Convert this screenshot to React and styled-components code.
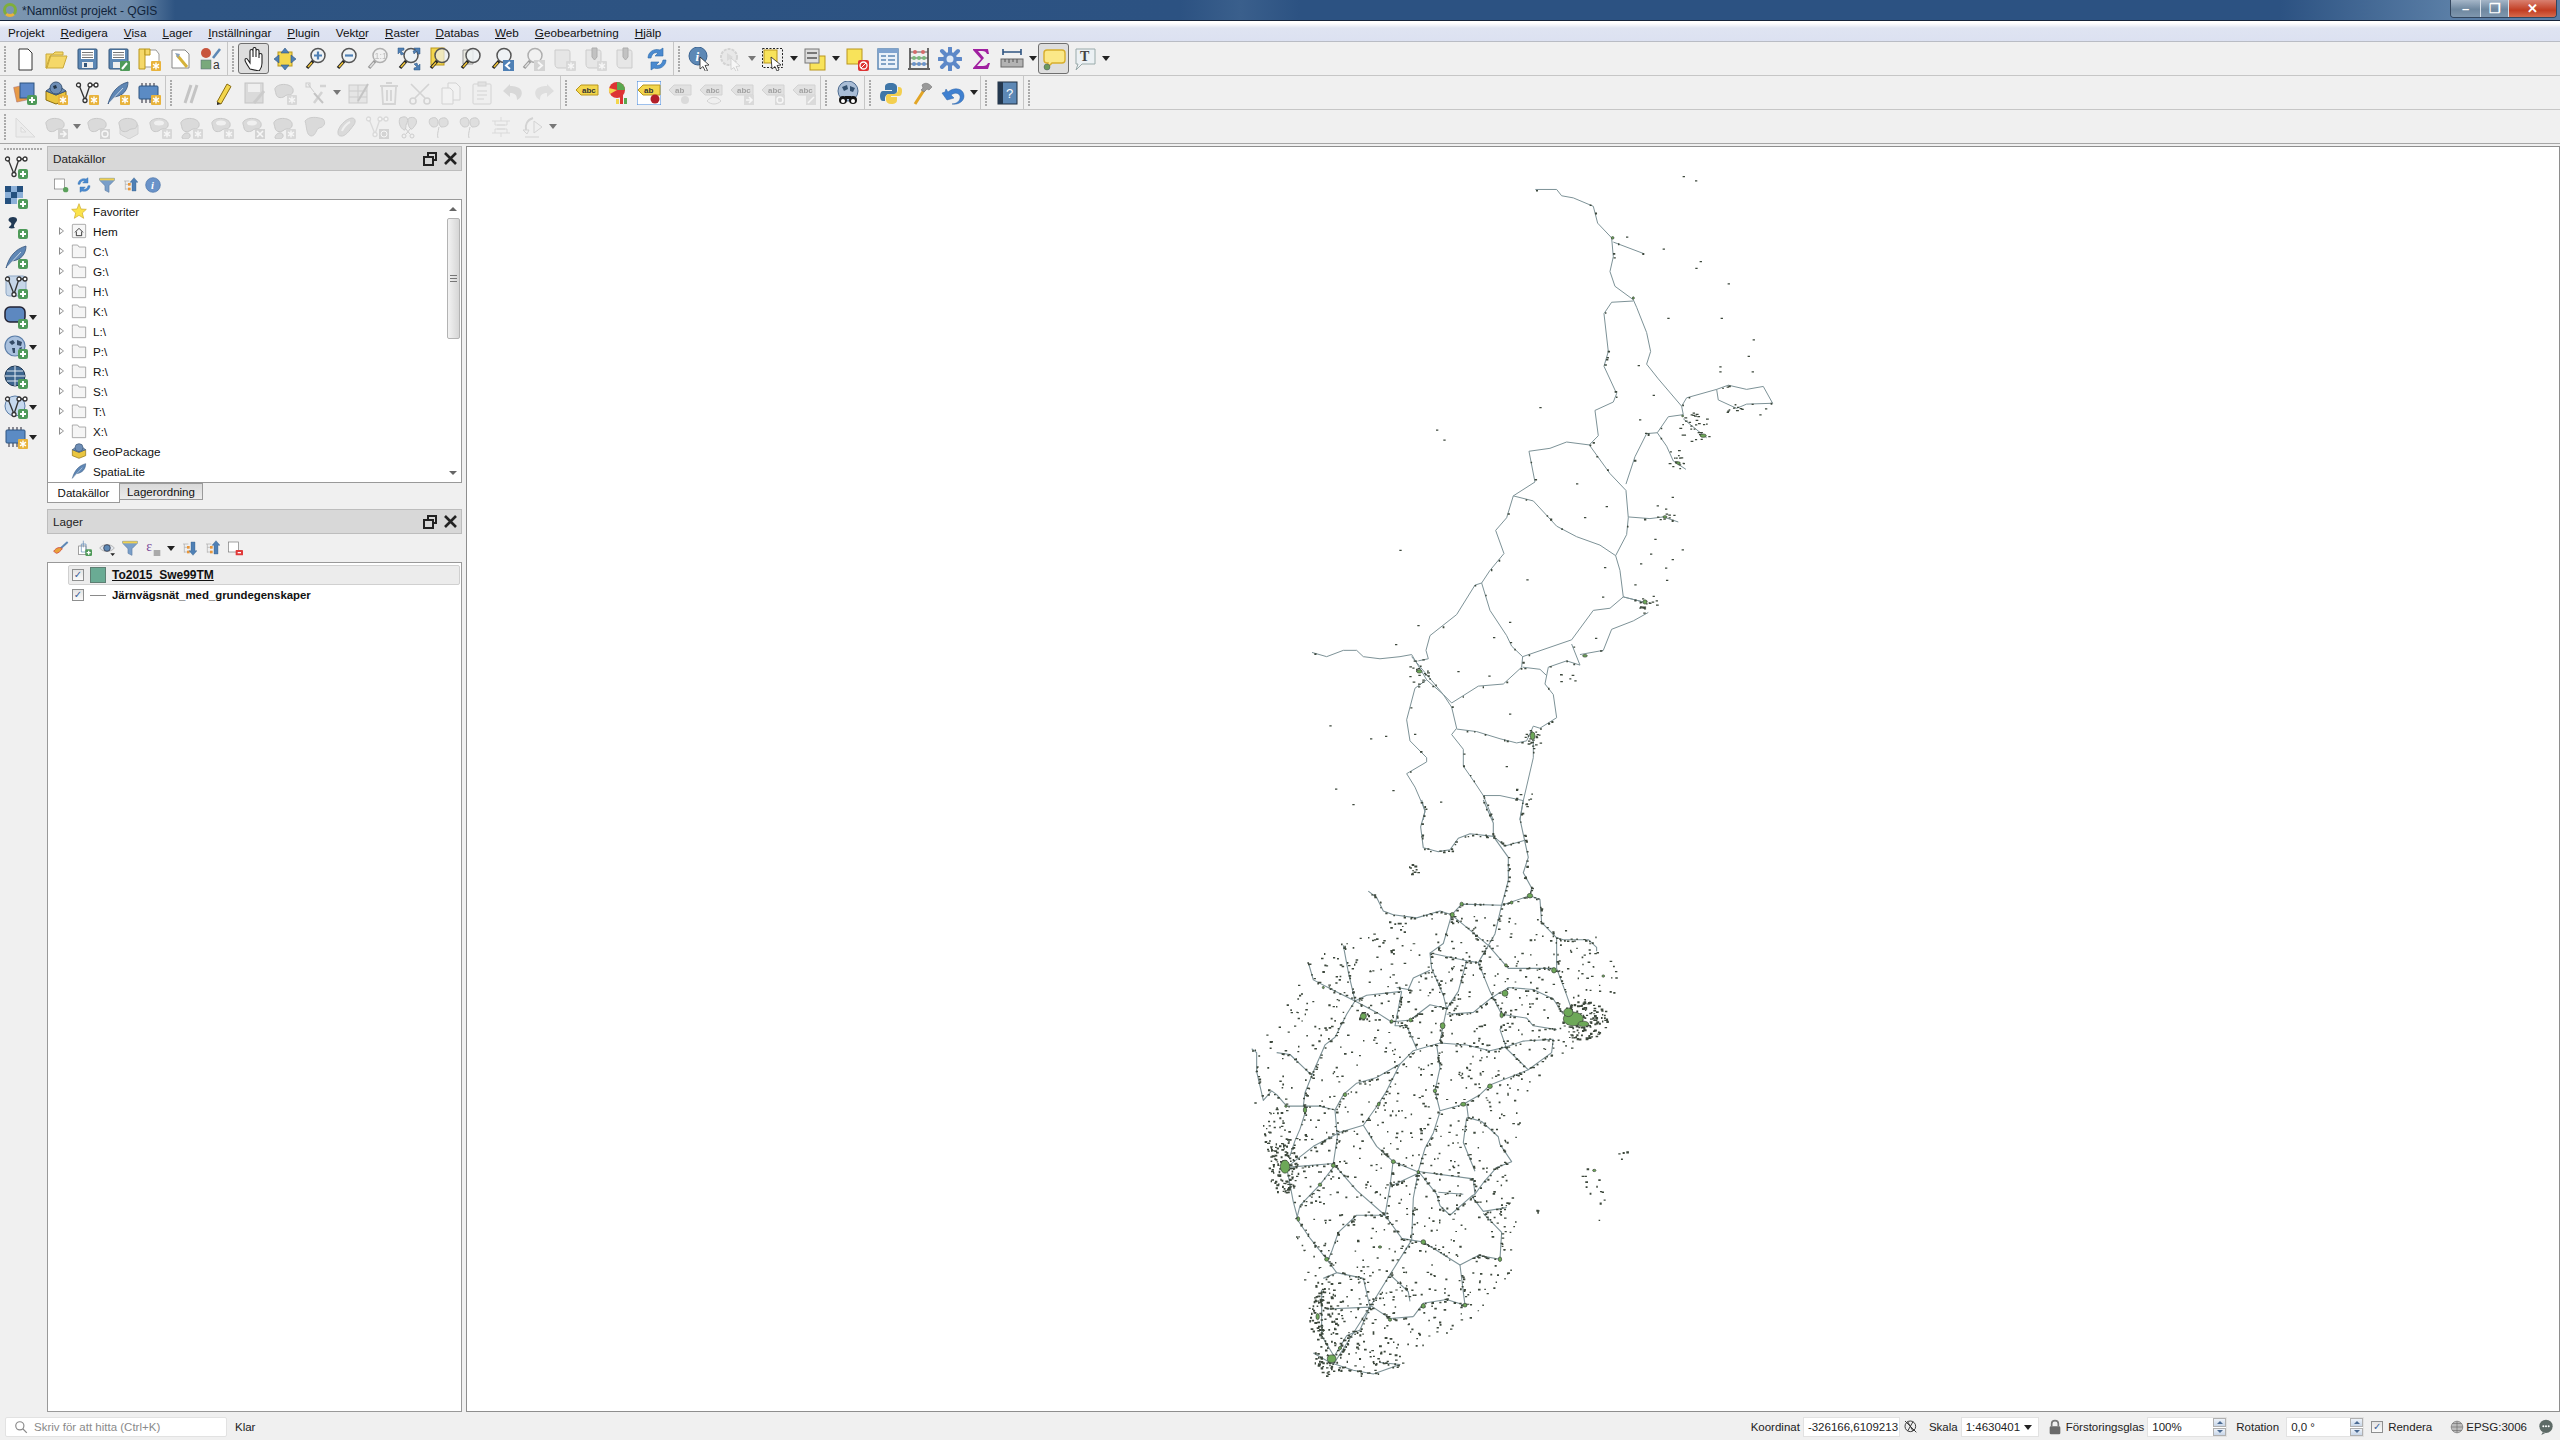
import React from "react";
import styled, { createGlobalStyle } from "styled-components";

const Global = createGlobalStyle`
  html, body { margin: 0; padding: 0; background: #f0f0f0; }
  body { font-family: "Liberation Sans", Arial, sans-serif; font-size: 12px; color: #111; }
`;

/* ---------- icons ---------- */
const I = ({ children, s = 24 }) => (
  <svg width={s} height={s} viewBox="0 0 24 24" fill="none">{children}</svg>
);
const Plus = () => (
  <g>
    <rect x="14" y="14" width="10" height="10" rx="2" fill="#4f9a59" />
    <path d="M19 16v6M16 19h6" stroke="#fff" strokeWidth="2" />
  </g>
);
const Star = () => (
  <g>
    <rect x="14" y="14" width="10" height="10" rx="1" fill="#e8b33c" />
    <path d="M19 15.5v7M16 17.2l6 3.6M22 17.2l-6 3.6" stroke="#fff" strokeWidth="1.4" />
  </g>
);
const Mag = ({ children, glass = "#eef2f5" }) => (
  <g>
    <path d="M10 13L3 21" stroke="#222" strokeWidth="3.4" />
    <path d="M8 15.5L4 20" stroke="#f0c53a" strokeWidth="1.6" />
    <circle cx="14" cy="8.5" r="7" fill={glass} stroke="#555" strokeWidth="1.5" />
    {children}
  </g>
);
const Blob = ({ fill = "#b9bdb6" }) => (
  <path d="M3 6c3-3 9-3 12-2s6 3 5 7-6 2-8 4-8 3-9-2-2-5 0-7z" fill={fill} stroke="#8d918a" />
);
const Vert = ({ stroke = "#333" }) => (
  <g stroke={stroke} strokeWidth="1.3">
    <path d="M4 4l6 15 5-15h6" />
    <circle cx="3.5" cy="4" r="2" fill="#fff" />
    <circle cx="10" cy="19.5" r="2" fill="#fff" />
    <circle cx="15" cy="4" r="2" fill="#fff" />
    <circle cx="21" cy="4" r="2" fill="#fff" />
  </g>
);
const Feather = ({ fill = "#5f87b5" }) => (
  <g>
    <path d="M2 23C5 12 11 4 22 1c0 7-4 14-14 15z" fill={fill} stroke="#37567c" strokeWidth=".8" />
    <path d="M3 22L17 7" stroke="#dfe8f2" strokeWidth=".8" />
  </g>
);
const Globe = () => (
  <g>
    <circle cx="11" cy="11" r="10" fill="#a9c1de" stroke="#5a7da8" strokeWidth="1.2" />
    <path d="M5 7l4-2 2 3-3 2zM13 5l5 2-1 4-4-1zM8 13l3 0 0 5-2 0zM15 13l3-1-1 4z" fill="#334a66" />
  </g>
);
const Chip = () => (
  <g>
    <path d="M5 2v20M9 2v20M13 2v20M17 2v20" stroke="#223" strokeWidth="1" />
    <rect x="2" y="5" width="19" height="13" rx="1" fill="#5b8bc4" stroke="#2f5480" />
  </g>
);
const Box = () => (
  <g>
    <path d="M2 10l10 4 10-4v9l-10 4-10-4z" fill="#e9c53f" stroke="#8a6d10" />
    <path d="M2 10l10-7 10 7-10 4z" fill="#6e8eb6" stroke="#3c5778" />
  </g>
);
const Label = ({ c = "#f3d64c", b = "#b9961c", t = "abc" }) => (
  <g>
    <path d="M1 9l5-5h17v10H6z" fill={c} stroke={b} />
    <text x="7" y="12" fontSize="8" fontWeight="700" fontFamily="Liberation Sans" fill="#333">{t}</text>
  </g>
);
const Scroll = ({ children }) => (
  <g>
    <path d="M3 3h13c2 0 2 2 2 4v14H6c-2 0-3-2-3-4z" fill="#d8d8d0" stroke="#999" />
    {children}
  </g>
);

const icons = {
  doc: <path d="M6 2h9l4 4v17H6z" fill="#fff" stroke="#333" />,
  folder: <path d="M2 7h7l2-2h8v3H7L3 21H2zM6 9h17l-4 12H2z" fill="#f5d869" stroke="#c9a93a" />,
  save: (
    <g>
      <rect x="3" y="2" width="19" height="20" rx="1" fill="#5d88b5" stroke="#35577c" />
      <rect x="6" y="3" width="13" height="9" fill="#fff" />
      <path d="M7 5.5h11M7 8h11M7 10.5h11" stroke="#777" />
      <rect x="7" y="15" width="11" height="6" fill="#eee" />
      <rect x="9" y="16" width="3" height="4" fill="#35577c" />
    </g>
  ),
  saveas: (
    <g>
      <rect x="3" y="2" width="19" height="20" rx="1" fill="#5d88b5" stroke="#35577c" />
      <rect x="6" y="3" width="13" height="9" fill="#fff" />
      <path d="M7 5.5h11M7 8h11M7 10.5h11" stroke="#777" />
      <rect x="7" y="15" width="7" height="6" fill="#eee" />
      <rect x="14" y="14" width="10" height="10" rx="1" fill="#4f9a59" />
      <path d="M16 22l5-6" stroke="#fff" strokeWidth="2" />
    </g>
  ),
  layout: (
    <g>
      <path d="M7 3h12l3 4v13H7z" fill="#fff" stroke="#999" />
      <path d="M2 2h6v20H2z" fill="#f5d869" stroke="#b9961c" />
      <path d="M8 2h5v6H8z" fill="#f5d869" stroke="#b9961c" />
      <Star />
    </g>
  ),
  manager: (
    <g>
      <path d="M4 3h13l4 4v14H4z" fill="#fff" stroke="#888" />
      <path d="M9 8l10 12" stroke="#d5b23a" strokeWidth="3" />
      <path d="M7 6l5 1-2 4z" fill="#8aa0b8" />
    </g>
  ),
  style: (
    <g>
      <circle cx="7" cy="6" r="5" fill="#c8553d" />
      <path d="M14 11l7-9" stroke="#5d88b5" strokeWidth="2.6" />
      <rect x="2" y="13" width="10" height="9" fill="#79a97c" stroke="#567" strokeWidth=".5" />
      <text x="14" y="22" fontSize="12" fontFamily="Liberation Sans" fill="#333">a</text>
    </g>
  ),
  hand: <path d="M8 22c-2-3-5-7-5-9s2-2 3 0l2 3V4c0-2 3-2 3 0v6-8c0-2 3-2 3 0v8-6c0-2 3-2 3 0v7-3c0-2 3-2 3 0v8c0 4-1 6-3 8z" fill="#fff" stroke="#222" strokeWidth="1.1" />,
  pan: (
    <g>
      <rect x="5" y="5" width="14" height="14" fill="#f3d64c" stroke="#b9961c" />
      <path d="M12 1l4 5h-8zM12 23l-4-5h8zM1 12l5-4v8zM23 12l-5 4V8z" fill="#4f80b5" stroke="#2f5480" strokeWidth=".6" />
    </g>
  ),
  zoomin: <Mag><path d="M14 4.5v8M10 8.5h8" stroke="#4f80b5" strokeWidth="2.2" /></Mag>,
  zoomout: <Mag><path d="M10 8.5h8" stroke="#4f80b5" strokeWidth="2.2" /></Mag>,
  zoom11: <Mag><text x="8.5" y="12" fontSize="9" fill="#777" fontFamily="Liberation Sans">1:1</text></Mag>,
  zoomfull: (
    <g>
      <Mag />
      <path d="M1 1h6v2L4 4l3 3-3 1-1-3-2 2zM23 1v6h-2l-1-3-3 3-1-3 3-1-2-2zM23 23h-6v-2l3-1-3-3 3-1 1 3 2-2z" fill="#4f80b5" stroke="#2f5480" strokeWidth=".5" />
    </g>
  ),
  zoomsel: (
    <g>
      <rect x="3" y="1" width="13" height="17" fill="#f3d64c" stroke="#b9961c" />
      <Mag glass="#eef2f5aa" />
    </g>
  ),
  zoomlayer: (
    <g>
      <path d="M4 3h10v14H4z" fill="#e8e8e0" stroke="#999" />
      <Mag glass="#eef2f5cc" />
    </g>
  ),
  zoomlast: (
    <g>
      <Mag />
      <rect x="13" y="13" width="11" height="11" fill="#4f80b5" />
      <path d="M20 15l-4 3.5 4 3.5" stroke="#fff" strokeWidth="2" />
    </g>
  ),
  zoomnext: (
    <g>
      <Mag />
      <rect x="13" y="13" width="11" height="11" fill="#aaa" />
      <path d="M17 15l4 3.5-4 3.5" stroke="#fff" strokeWidth="2" />
    </g>
  ),
  mapnew: <Scroll><Star /></Scroll>,
  mapbook: <Scroll><path d="M9 1h5v9l-2.5 3L9 10z" fill="#5d88b5" stroke="#35577c" /><Star /></Scroll>,
  mapmark: <Scroll><path d="M9 1h5v9l-2.5 3L9 10z" fill="#5d88b5" stroke="#35577c" /></Scroll>,
  refresh: (
    <g fill="#4a8ad0" stroke="#2d6aa8" strokeWidth=".6">
      <path d="M3 11C3 5 9 1 15 3l3-2v8h-8l3-3c-4-1-6 1-7 5z" />
      <path d="M21 13c0 6-6 10-12 8l-3 2v-8h8l-3 3c4 1 6-1 7-5z" />
    </g>
  ),
  identify: (
    <g>
      <circle cx="10" cy="9" r="9" fill="#5d88b5" stroke="#3a6391" />
      <text x="7.5" y="14" fontSize="13" fontWeight="700" fontStyle="italic" fontFamily="Liberation Serif" fill="#fff">i</text>
      <path d="M12 10l9 8-4 .5 2.5 5-2 1-2.5-5-3 2.5z" fill="#fff" stroke="#222" strokeWidth=".8" />
    </g>
  ),
  action: (
    <g>
      <circle cx="10" cy="10" r="8" fill="#ddd" stroke="#aaa" strokeWidth="2" strokeDasharray="3 1" />
      <path d="M8 6l6 4-6 4z" fill="#bbb" />
      <path d="M12 11l9 8-4 .5 2 4-2 1-2-4-3 2z" fill="#fff" stroke="#999" strokeWidth=".8" />
    </g>
  ),
  select: (
    <g>
      <rect x="1.5" y="1.5" width="20" height="19" fill="none" stroke="#222" strokeDasharray="2 1.5" />
      <rect x="3" y="3" width="13" height="13" fill="#f8e35a" stroke="#b9961c" />
      <path d="M10 10l10 8-4 .5 2 4.5-2 1-2-4.5-3 2.5z" fill="#fff" stroke="#222" strokeWidth=".8" />
    </g>
  ),
  selform: (
    <g>
      <rect x="7" y="9" width="15" height="14" fill="#f8e35a" stroke="#b9961c" />
      <rect x="2" y="2" width="14" height="14" fill="#ddd" stroke="#777" />
      <path d="M4 6h10M4 11h10" stroke="#777" strokeWidth="2" />
    </g>
  ),
  deselect: (
    <g>
      <rect x="2" y="2" width="15" height="15" fill="#f8e35a" stroke="#b9961c" />
      <rect x="13" y="13" width="11" height="11" rx="2" fill="#d33" />
      <circle cx="18.5" cy="18.5" r="3.5" stroke="#fff" strokeWidth="1.3" />
      <path d="M16 21l5-5" stroke="#fff" />
    </g>
  ),
  table: (
    <g>
      <rect x="2" y="2" width="20" height="20" fill="#eaf1f9" stroke="#5d88b5" strokeWidth="1.5" />
      <rect x="2" y="2" width="20" height="4" fill="#7fa3cf" />
      <path d="M5 9h5M12 9h7M5 13h5M12 13h7M5 17h5M12 17h7" stroke="#5d88b5" strokeWidth="1.5" />
    </g>
  ),
  abacus: (
    <g>
      <path d="M3 1v20M21 1v20M1 22h22" stroke="#333" strokeWidth="1.4" />
      <path d="M3 5h18M3 11h18M3 17h18" stroke="#555" />
      <g fill="#d56a6a"><circle cx="8" cy="5" r="2" /><circle cx="16" cy="5" r="2" /></g>
      <g fill="#7db87d"><circle cx="7" cy="11" r="2" /><circle cx="12" cy="11" r="2" /><circle cx="17" cy="11" r="2" /></g>
      <g fill="#6a93c9"><circle cx="7" cy="17" r="2" /><circle cx="12" cy="17" r="2" /><circle cx="17" cy="17" r="2" /></g>
    </g>
  ),
  gear: (
    <g>
      <path d="M12 1v22M1 12h22M4 4l16 16M20 4L4 20" stroke="#5d88c8" strokeWidth="4" strokeLinecap="round" />
      <circle cx="12" cy="12" r="7" fill="#5d88c8" />
      <circle cx="12" cy="12" r="3.5" fill="#dfe9f6" />
    </g>
  ),
  sigma: <path d="M4 2h15l1 5h-2c-1-2-2-3-5-3H9l6 7-7 8h6c3 0 4-1 5-3h2l-2 6H4v-1l8-9-8-9z" fill="#a020a0" />,
  measure: (
    <g>
      <path d="M3 5h18M3 2v6M21 2v6" stroke="#2f5480" strokeWidth="1.6" />
      <rect x="1" y="12" width="22" height="8" fill="#b3b3b3" stroke="#666" />
      <path d="M5 12v3M9 12v4M13 12v3M17 12v4" stroke="#555" />
    </g>
  ),
  tip: (
    <g>
      <path d="M5 3h15c2 0 3 1 3 3v7c0 2-1 3-3 3H10l-5 5 1-5H5c-2 0-3-1-3-3V6c0-2 1-3 3-3z" fill="#fbe888" stroke="#d8ae2c" strokeWidth="1.4" />
      <circle cx="5" cy="20" r="3" fill="#6b9a5b" stroke="#456" strokeWidth=".5" />
    </g>
  ),
  text: (
    <g>
      <path d="M3 2h19v15H9l-6 6 2-6H3z" fill="#ecf1f4" stroke="#9aa" />
      <text x="7" y="14" fontSize="14" fontWeight="700" fontFamily="Liberation Serif" fill="#444">T</text>
    </g>
  ),
  dsm: (
    <g>
      <rect x="2" y="5" width="12" height="15" fill="#e79a46" stroke="#a66" strokeWidth=".5" transform="rotate(-12 8 12)" />
      <rect x="7" y="2" width="14" height="15" fill="#5d88c8" stroke="#2f5480" />
      <Plus />
    </g>
  ),
  gpkg: <g><Box /><circle cx="12" cy="7" r="6" fill="#6e8eb6" stroke="#3c5778" /><path d="M9 5l3-1 1 3-3 1z" fill="#234" /><Star /></g>,
  newshp: <g><Vert /><Star /></g>,
  newsl: <g><Feather /><Star /></g>,
  newmem: <g><Chip /><Star /></g>,
  pencils: <g stroke="#888" strokeWidth="3"><path d="M5 22L11 4M11 22L17 4" /></g>,
  pencil: (
    <g>
      <path d="M6 21L16 3l4 2.5L10 23z" fill="#f3d64c" stroke="#8a6d10" />
      <path d="M6 21l4 2-4 1z" fill="#333" />
    </g>
  ),
  saveedit: <g><rect x="3" y="2" width="18" height="20" fill="#bbb" stroke="#888" /><rect x="6" y="3" width="12" height="8" fill="#eee" /><path d="M12 22L22 10" stroke="#999" strokeWidth="3" /></g>,
  addfeat: <g><Blob /><Star /></g>,
  vtool: <g><path d="M4 3l6 8" stroke="#999" /><rect x="2" y="2" width="4" height="4" stroke="#999" /><path d="M16 5h6M10 22l8-11" stroke="#aaa" strokeWidth="2.5" /><path d="M10 12l9 10" stroke="#888" strokeWidth="2" /></g>,
  modattr: <g><rect x="3" y="4" width="18" height="18" fill="#dcd6b8" stroke="#999" /><path d="M3 10h18M3 16h18M12 4v18" stroke="#999" /><path d="M12 20L22 3" stroke="#888" strokeWidth="2" /></g>,
  trash: <g fill="none" stroke="#c2a8a4" strokeWidth="1.8"><path d="M5 6l1 17h12l1-17M3 5h18M9 2h6M10 9v11M14 9v11" /></g>,
  cut: <g stroke="#aaa" strokeWidth="1.6"><path d="M3 3l14 14M21 3L7 17" /><circle cx="5" cy="20" r="3" /><circle cx="19" cy="20" r="3" /></g>,
  copy: <g stroke="#aaa" fill="#f4f4f4"><path d="M9 2h8l4 4v13H9z" /><path d="M3 7h8l3 3v13H3z" /></g>,
  paste: <g stroke="#aaa" fill="#eee"><rect x="3" y="3" width="18" height="20" rx="1" /><rect x="8" y="1" width="8" height="4" fill="#ccc" /><path d="M7 10h10M7 14h10M7 18h7" /></g>,
  undo: <path d="M9 3L2 10l7 6v-4c5 0 7 2 7 7 4-2 6-6 4-10-2-3-6-4-11-4z" fill="#b7b7b7" />,
  redo: <path d="M15 3l7 7-7 6v-4c-5 0-7 2-7 7-4-2-6-6-4-10 2-3 6-4 11-4z" fill="#c4c4c4" />,
  lblabc: <Label />,
  diagram: (
    <g>
      <circle cx="11" cy="9" r="8" fill="#d33" />
      <path d="M11 9V1a8 8 0 018 8z" fill="#5aa84f" />
      <path d="M11 9l-7 4a8 8 0 01-1-6z" fill="#f3d64c" />
      <rect x="14" y="14" width="3" height="9" fill="#d33" />
      <rect x="18" y="17" width="3" height="6" fill="#5aa84f" />
      <rect x="10" y="18" width="3" height="5" fill="#f3d64c" />
    </g>
  ),
  lblhl: (
    <g>
      <rect x="0" y="0" width="24" height="24" fill="#fff" stroke="#3a80d8" />
      <Label t="ab" />
      <circle cx="18" cy="18" r="4.5" fill="#b3202a" />
    </g>
  ),
  lblpin: <g><Label c="#ccc" b="#aaa" t="ab" /><circle cx="17" cy="19" r="4" fill="#bbb" /></g>,
  lbleye: <g><Label c="#ccc" b="#aaa" /><path d="M8 20c4-5 10-5 14 0-4 4-10 4-14 0z" fill="#eee" stroke="#aaa" /></g>,
  lblmove: <g><Label c="#ccc" b="#aaa" /><rect x="14" y="14" width="10" height="10" fill="#bbb" /><path d="M16 19h5M19 16l3 3-3 3" stroke="#fff" strokeWidth="1.6" /></g>,
  lblrot: <g><Label c="#ccc" b="#aaa" /><rect x="14" y="14" width="10" height="10" fill="#bbb" /><circle cx="19" cy="19" r="3" stroke="#fff" strokeWidth="1.4" /></g>,
  lbledit: <g><Label c="#ccc" b="#aaa" /><rect x="14" y="14" width="10" height="10" fill="#bbb" /><path d="M16 22l6-6" stroke="#fff" strokeWidth="1.6" /></g>,
  search: (
    <g>
      <circle cx="12" cy="10" r="10" fill="#a9bdd6" stroke="#4c6a8e" />
      <path d="M6 6l5-2 1 4-4 2zM14 5l5 2-2 4-3-1z" fill="#33506f" />
      <circle cx="7" cy="19" r="4" fill="#111" />
      <circle cx="17" cy="19" r="4" fill="#111" />
      <circle cx="7" cy="20" r="2" fill="#fff" />
      <circle cx="17" cy="20" r="2" fill="#fff" />
      <rect x="9" y="15" width="6" height="3" fill="#111" />
    </g>
  ),
  python: (
    <g>
      <path d="M12 2c-5 0-6 2-6 4v3h7v1H4c-2 0-3 2-3 5s1 5 3 5h2v-3c0-2 2-4 4-4h5c2 0 3-1 3-3V6c0-2-2-4-6-4z" fill="#3f76a8" />
      <path d="M12 23c5 0 6-2 6-4v-3h-6v-1h8c2 0 3-2 3-5s-1-4-3-4h-1v3c0 2-2 4-4 4h-5c-2 0-3 1-3 3v3c0 2 2 4 5 4z" fill="#f3cf4f" />
    </g>
  ),
  hammer: <g><path d="M5 23L16 6" stroke="#e2a525" strokeWidth="3" /><path d="M12 4c3-3 7-2 10 2l-3 3-2-1-3 3-3-2 2-2z" fill="#999" stroke="#666" strokeWidth=".5" /></g>,
  plugin: <path d="M4 11l-3 1 5 7 7-2-3-3c4-3 8-2 9 1 1 5-4 8-8 8 7 1 12-3 12-8 0-7-9-10-16-4l-2-3z" fill="#3f80d0" stroke="#2d63a6" strokeWidth=".5" />,
  help: (
    <g>
      <rect x="3" y="1" width="19" height="22" fill="#5d88b5" stroke="#1f2f40" />
      <rect x="3" y="1" width="5" height="22" fill="#24384f" />
      <text x="11" y="17" fontSize="13" fontFamily="Liberation Sans" fill="#fff">?</text>
    </g>
  ),
  measureline: <g stroke="#bbb" fill="#e8e8e0"><path d="M3 3v19h19z" /><path d="M8 12v5h5z" fill="#f0f0f0" /></g>,
  blobarrow: <g><Blob /><rect x="14" y="14" width="10" height="10" fill="#aaa" /><path d="M16 19h5M19 16l3 3-3 3" stroke="#fff" strokeWidth="1.6" /></g>,
  blobrot: <g><Blob /><rect x="14" y="14" width="10" height="10" fill="#aaa" /><circle cx="19" cy="19" r="3" stroke="#fff" strokeWidth="1.4" /></g>,
  hexa: <g><path d="M12 5l9 5v9l-9 5-9-5v-9z" fill="#ccc" stroke="#aaa" /><Blob /></g>,
  ring: <g><Blob /><ellipse cx="11" cy="8" rx="5" ry="2.5" fill="#f0f0f0" /><Star /></g>,
  part: <g><Blob /><path d="M3 23c0-5 7-7 8-3s-5 5-8 3z" fill="#b9bdb6" stroke="#8d918a" /><Star /></g>,
  ringdel: <g><Blob /><ellipse cx="11" cy="8" rx="5" ry="2.5" fill="#f0f0f0" /><rect x="14" y="14" width="10" height="10" fill="#aaa" /><path d="M16 16l6 6M22 16l-6 6" stroke="#fff" strokeWidth="1.6" /></g>,
  reshape: <path d="M2 6c4-5 12-4 18-2 3 3 2 8-4 9-3 1-3 8-8 8-5-1-4-9-6-15z" fill="#b9bdb6" stroke="#999" />,
  offset: <g><path d="M4 18c-1-5 8-15 14-15 4 0 4 5 1 8-3 4-8 11-12 10-2 0-3-1-3-3z" fill="#bbb" stroke="#999" /><path d="M8 16c1-3 5-8 8-9" stroke="#eee" strokeWidth="2" /></g>,
  vertex: <g><Vert stroke="#bbb" /><rect x="14" y="14" width="10" height="10" fill="#aaa" /><circle cx="19" cy="19" r="3" stroke="#fff" /></g>,
  split: <g><path d="M4 3c6-3 10 0 6 7 0 0 0 6-2 5C4 13 2 7 4 3zM13 3c5-2 9 1 7 6-2 3-4 6-5 5-3-2-4-8-2-11z" fill="#c4c4c4" stroke="#999" /><path d="M9 13l5 6M15 13l-5 6" stroke="#999" /><circle cx="8" cy="21" r="2" stroke="#999" /><circle cx="16" cy="21" r="2" stroke="#999" /></g>,
  merge: <g><path d="M3 4c5-3 8-1 8 4 0 4-3 4-5 4-3-1-5-5-3-8zM13 4c5-3 9 0 8 5-1 3-5 3-7 3-2-2-3-6-1-8z" fill="#c4c4c4" stroke="#999" /><path d="M12 12c-1 5-2 8-1 11" stroke="#999" /></g>,
  rotate: <g stroke="#bbb"><path d="M3 6h18M3 18h18M12 2v4M12 18v4M8 10h8M8 14h8" /><path d="M6 6v4h12V6M6 18v-4h12v4" /></g>,
  curve: <g><path d="M13 3c-6 2-8 7-7 12" stroke="#aaa" strokeWidth="2" /><path d="M3 15l6 0-2 4zM14 6l8 6-8 6z" fill="#eee" stroke="#aaa" /><path d="M5 22h14" stroke="#aaa" /></g>,
  vline: <g><Vert /><Plus /></g>,
  raster: (
    <g fill="#24507e">
      <rect x="1" y="1" width="6" height="6" /><rect x="13" y="1" width="6" height="6" /><rect x="7" y="7" width="6" height="6" /><rect x="1" y="13" width="6" height="6" />
      <g fill="#8cb0d8"><rect x="7" y="1" width="6" height="6" /><rect x="1" y="7" width="6" height="6" /><rect x="13" y="7" width="6" height="6" /><rect x="7" y="13" width="6" height="6" /></g>
      <Plus />
    </g>
  ),
  mesh: <g><path d="M9 2c4 0 5 3 3 5-2 3-3 4-1 6-4 1-7 0-6-1 3-2 3-4 1-5C3 5 5 2 9 2z" fill="#223a55" /><Plus /></g>,
  vfeather: <g><Feather /><Plus /></g>,
  vvirtual: <g><rect x="2" y="1" width="20" height="20" rx="3" fill="#c6d6e8" stroke="#8fa8c6" /><Vert /><Plus /></g>,
  vblob: <g><rect x="1" y="2" width="20" height="15" rx="5" fill="#5d88c0" stroke="#223" strokeWidth="1.5" /><Plus /></g>,
  vglobe: <g><Globe /><Plus /></g>,
  vwms: <g><circle cx="11" cy="11" r="10" fill="#3e668f" stroke="#1d3550" /><path d="M1 11h20M11 1v20M3 6h16M3 16h16" stroke="#e5ecf4" /><Plus /></g>,
  vgv: <g><circle cx="11" cy="11" r="10" fill="#c6d9ee" stroke="#5a7da8" /><Vert /><Plus /></g>,
  vchip: <g><Chip /><Star /></g>,
  addgroup: <g><rect x="2" y="3" width="15" height="15" fill="#fff" stroke="#777" /><circle cx="19" cy="19" r="4" fill="#5aa05a" /></g>,
  filtery: <g><path d="M1 2h22v3l-8 8v10l-6-3v-7L1 5z" fill="#7a9fc9" stroke="#5d7ea6" /><rect x="1" y="2" width="22" height="3" fill="#f0d050" /></g>,
  collapse: <g><path d="M3 6h8M5 6v13M5 11h5M5 18h5" stroke="#aaa" /><rect x="9" y="9" width="4" height="4" fill="#e8963a" /><rect x="9" y="16" width="4" height="4" fill="#e8963a" /><path d="M18 1l6 7h-3v13h-6V8h-3z" fill="#4f80b5" stroke="#2f5480" strokeWidth=".5" /></g>,
  expand: <g><path d="M3 6h8M5 6v13M5 11h5M5 18h5" stroke="#aaa" /><rect x="9" y="9" width="4" height="4" fill="#e8963a" /><rect x="9" y="16" width="4" height="4" fill="#e8963a" /><path d="M18 23l6-7h-3V3h-6v13h-3z" fill="#4f80b5" stroke="#2f5480" strokeWidth=".5" /></g>,
  info: <g><circle cx="12" cy="12" r="11" fill="#6a93c9" stroke="#4b74a8" /><text x="9" y="18" fontSize="16" fontWeight="700" fontStyle="italic" fontFamily="Liberation Serif" fill="#fff">i</text></g>,
  brush: <g><path d="M10 14L22 3" stroke="#5d88b5" strokeWidth="3" /><path d="M1 17c4-6 9-7 13-4-2 3-6 7-9 7z" fill="#e8a23a" stroke="#c33" /></g>,
  addlayer: <g><rect x="4" y="9" width="11" height="13" fill="#fff" stroke="#777" /><path d="M8 6h7v12H8zM11 1v10" stroke="#5d88b5" /><Plus /></g>,
  eye: <g><path d="M1 12c6-7 16-7 22 0-6 7-16 7-22 0z" fill="#e4e9ef" stroke="#999" /><circle cx="12" cy="12" r="5" fill="#5d88b5" stroke="#223" /><path d="M17 20h7l-3.5 4z" fill="#222" /></g>,
  expr: <g><text x="2" y="17" fontSize="21" fontFamily="Liberation Serif" fill="#7b4a9a">ε</text><rect x="13" y="15" width="10" height="9" fill="#aaa" /></g>,
  remove: <g><rect x="2" y="3" width="15" height="15" fill="#fff" stroke="#777" /><rect x="13" y="15" width="11" height="8" rx="1" fill="#e03a3a" /><path d="M16 19h5" stroke="#fff" strokeWidth="2" /></g>,
  star: <path d="M12 1l3 8 8 .5-6 5.5 2 8-7-4.5L5 23l2-8-6-5.5L9 9z" fill="#fbe34a" stroke="#caa72a" />,
  home: <g><rect x="2" y="2" width="20" height="20" rx="1" fill="#f6f6f6" stroke="#888" /><path d="M6 14l6-6 6 6M8 13v6h8v-6" stroke="#222" strokeWidth="1.3" /></g>,
  dir: <path d="M2 7V3h8l2 3h10v16H2z" fill="#f5f5f5" stroke="#999" strokeWidth="1.2" />,
  gpkgtree: <g><Box /><circle cx="12" cy="7" r="6" fill="#6e8eb6" stroke="#3c5778" /></g>,
  slite: <Feather />,
  tracking: <g stroke="#333" strokeWidth="1.4"><circle cx="11" cy="11" r="8" fill="#eee" /><path d="M7 4l8 14M15 4L7 18M3 3l17 17" /></g>,
  lock: <g><path d="M7 11V7c0-6 10-6 10 0v4" stroke="#777" strokeWidth="2.5" /><rect x="4" y="11" width="16" height="12" rx="2" fill="#6a6a6a" /></g>,
  crs: <g><circle cx="12" cy="12" r="10" fill="#bcbcbc" stroke="#666" /><path d="M2 12h20M12 2v20M4 6h16M4 18h16" stroke="#666" /></g>,
  msg: <g><circle cx="12" cy="11" r="10" fill="#5d6a66" /><path d="M7 20l-2 4 6-3z" fill="#5d6a66" /><circle cx="8" cy="11" r="1.5" fill="#fff" /><circle cx="12" cy="11" r="1.5" fill="#fff" /><circle cx="16" cy="11" r="1.5" fill="#fff" /></g>,
  lens: <g stroke="#8a8a8a" strokeWidth="2"><circle cx="10" cy="10" r="7" fill="#fff" /><path d="M15 15l7 7" /></g>,
};

/* ---------- map ---------- */
const north = [
  "706,70 770,70 785,85 820,90 880,110 893,150 935,185 940,230 930,265 945,300 1000,332",
  "940,195 1030,222",
  "1000,332 1010,350 1040,410 1052,455 1040,485 1075,520 1145,585 1150,605",
  "1000,335 935,338 912,365 925,455 912,490 950,555 940,575 885,595 895,655 868,677",
  "868,677 800,670 750,685 687,692 705,765 640,798",
  "868,677 930,745 978,785 985,850 980,890 947,940 960,975 970,1038 1030,1050",
  "1150,605 1105,610 1072,648 1040,650 1005,705 978,770",
  "1145,585 1160,565 1250,545 1285,535 1340,545 1390,538 1418,578 1340,580 1310,590 1255,570 1250,545",
  "1150,615 1220,660",
  "1072,648 1100,680 1120,715 1158,735",
  "985,848 1050,852 1090,848 1135,860",
  "640,798 700,810 770,870 830,895 900,915 947,940",
  "640,798 620,850 587,880 612,935 570,975 545,1005 525,1010 470,1080 390,1130 378,1165 385,1185 355,1190",
  "545,1005 570,1070 620,1130 635,1155 668,1180",
  "1030,1050 970,1038 930,1065 880,1070 815,1140 668,1180 665,1205 610,1245 535,1250 455,1290 430,1270 335,1180",
  "36,1170 80,1180 130,1165 170,1165 190,1180 240,1185 300,1180 335,1175",
  "335,1175 380,1235 430,1270 455,1300 470,1350 455,1365 490,1400 490,1440 525,1480 550,1510 580,1568",
  "470,1352 530,1358 600,1375 650,1385 680,1380 700,1345 720,1350 770,1325 760,1270 735,1245 745,1205 800,1190 840,1200 815,1150",
  "668,1205 720,1210 740,1225",
  "840,1175 910,1165 935,1115 1000,1095 1045,1075",
  "380,1235 345,1255 320,1330 330,1380 380,1420 380,1430 320,1458 345,1490 375,1545 370,1568",
  "550,1510 600,1510 670,1522 700,1420 700,1380",
  "670,1522 660,1568",
];
const south = [
  "665,0 675,30 662,70 670,125",
  "670,125 715,135 750,130 775,100 810,88 880,95 925,150 925,210 905,275 885,350 865,380",
  "850,0 880,60 880,95",
  "970,0 960,50 975,110 985,150 970,190 995,230 990,250",
  "880,95 915,120 975,105",
  "990,250 1020,260 1025,320 1070,360 1070,440 1100,510 1120,560",
  "1070,360 1090,365 1165,365 1190,385 1190,395",
  "990,250 905,275 785,272 755,300",
  "755,300 720,290 650,308 580,300 550,290 530,255 505,238",
  "755,300 865,380 925,440 1060,440",
  "865,380 835,425 800,420 690,400 695,440 730,510 740,545 720,630",
  "755,300 730,375 690,400",
  "800,420 775,500 740,545 690,535 630,575 575,580 530,555 465,525",
  "835,425 870,500 905,560 980,570 1000,590 1070,600",
  "910,500 925,490 1000,495 1060,520 1090,560",
  "740,560 820,555 870,520 905,500",
  "465,525 440,560 405,620 375,640 340,710 315,765 310,800 318,810 300,860 285,890 270,930",
  "465,525 400,497 340,470 325,425",
  "465,525 445,450 430,380",
  "605,500 500,510 465,525",
  "605,500 585,590 620,590 650,650",
  "690,445 640,465 625,495 590,490",
  "1060,625 970,630 920,645 870,655 800,640 720,635 640,655 600,690 560,760 535,795 490,850 420,868 340,905 260,960",
  "905,590 900,600 920,650 985,705 1055,660 1060,625",
  "985,705 870,745 840,770 790,795 720,812 705,760 720,700 710,640",
  "600,690 530,725 470,740 430,770 405,810 360,800 315,800 260,800 230,770 215,760 190,785 170,710 170,660 155,650",
  "230,660 270,665 330,715",
  "405,810 412,880 400,950 260,960",
  "490,850 530,905 580,945 650,970 820,990 825,1030 850,1000 890,960 935,945 900,900 895,880 845,840 805,830 800,795",
  "800,830 790,895 825,970",
  "720,815 700,870 675,910 655,970 640,1040 635,1150 570,1240 510,1325 400,1475",
  "655,970 710,1030 720,1060 750,1085 815,1035 825,1030",
  "715,1025 790,1030",
  "815,1035 850,1075 920,1065",
  "850,1080 905,1130 900,1200",
  "635,1150 670,1155 780,1215 835,1190 900,1200",
  "780,1215 795,1320",
  "400,950 470,1020 555,1085 605,1145 635,1150",
  "580,940 570,1010 555,1085",
  "655,975 570,1010",
  "555,1085 470,1085 415,1130 395,1180 385,1200",
  "400,960 360,1005 300,1060 290,1095",
  "260,960 280,1050 295,1100 330,1145 380,1200 410,1235 490,1250 510,1325 480,1385 440,1400 395,1465",
  "510,1320 570,1355 640,1350",
  "570,1240 625,1285 630,1310",
  "380,1330 510,1325",
  "370,1250 410,1235",
  "365,1280 365,1400 400,1450",
  "340,1445 390,1470 460,1490 520,1500 600,1475 540,1470",
  "640,1350 670,1315 740,1305 795,1320",
];
const southBlobs = [
  [1120, 572, 30, 18], [1105, 555, 14, 11], [1150, 585, 16, 7], [255, 958, 14, 17], [395, 1460, 13, 10], [728, 590, 7, 8],
  [790, 795, 8, 5], [870, 748, 7, 6], [915, 505, 9, 8], [905, 562, 5, 7], [990, 250, 8, 6],
  [757, 300, 6, 6], [785, 272, 5, 5], [1062, 445, 7, 7], [670, 1155, 7, 6], [655, 972, 4, 4],
  [400, 955, 6, 5], [536, 795, 4, 5], [490, 565, 9, 8], [580, 945, 6, 5], [353, 1350, 5, 8],
  [900, 1200, 5, 6], [795, 1320, 6, 5], [380, 1200, 6, 5], [570, 1358, 5, 4], [315, 810, 5, 7],
  [435, 770, 5, 5], [360, 1005, 5, 4], [295, 1095, 4, 6], [670, 1322, 6, 6], [1210, 460, 4, 3],
  [918, 432, 4, 4], [935, 268, 4, 4], [1183, 968, 5, 3], [420, 1432, 5, 4], [540, 1168, 5, 3],
  [705, 760, 5, 5], [632, 575, 5, 5], [575, 578, 4, 4], [258, 800, 4, 3], [370, 490, 3, 3],
];
const northBlobs = [
  [1210, 655, 9, 4], [698, 1368, 7, 9], [1035, 1050, 6, 5], [855, 1178, 7, 3], [1095, 848, 6, 3],
  [358, 1215, 8, 4], [1135, 720, 6, 3], [1000, 328, 3, 3], [938, 185, 4, 3], [1148, 608, 3, 2],
];
const southOutline = [
  [160, 650], [330, 420], [430, 370], [600, 300], [1000, 300], [1170, 330], [1260, 450], [1220, 570],
  [1000, 730], [960, 850], [940, 950], [950, 1150], [940, 1220], [830, 1340], [600, 1480], [430, 1520],
  [360, 1500], [320, 1300], [280, 1100], [210, 950], [160, 790],
];

const rng = (seed) => () => {
  seed = (seed + 0x6d2b79f5) | 0;
  let t = Math.imul(seed ^ (seed >>> 15), 1 | seed);
  t = (t + Math.imul(t ^ (t >>> 7), 61 | t)) ^ t;
  return ((t ^ (t >>> 14)) >>> 0) / 4294967296;
};
const inside = (x, y, poly) => {
  let c = false;
  for (let i = 0, j = poly.length - 1; i < poly.length; j = i++) {
    const [xi, yi] = poly[i];
    const [xj, yj] = poly[j];
    if (yi > y !== yj > y && x < ((xj - xi) * (y - yi)) / (yj - yi) + xi) c = !c;
  }
  return c;
};
const speck = (x, y, w, h) => `M${x.toFixed(0)} ${y.toFixed(0)}h${w.toFixed(1)}v${h.toFixed(1)}h${(-w).toFixed(1)}z`;

const alongLines = (lines, r, chance, spread) => {
  let d = "";
  lines.forEach((line) => {
    const pts = line.split(" ").map((p) => p.split(",").map(Number));
    pts.slice(1).forEach((p, i) => {
      const q = pts[i];
      const steps = Math.hypot(p[0] - q[0], p[1] - q[1]) / 10;
      for (let k = 0; k < steps; k++) {
        const t = r();
        if (r() < chance) {
          d += speck(q[0] + (p[0] - q[0]) * t + (r() - 0.5) * spread, q[1] + (p[1] - q[1]) * t + (r() - 0.5) * spread, 4 + r() * 4, 3 + r() * 2);
        }
      }
    });
  });
  return d;
};

function scatterSouth() {
  const r = rng(42);
  let d = "";
  for (let n = 0; n < 1900; n++) {
    const x = 150 + r() * 1120;
    const y = 100 + r() * 1430;
    if (inside(x, y, southOutline)) d += speck(x, y, 4 + r() * 4, 3 + r() * 2);
  }
  d += alongLines(south, r, 0.65, 7);
  const clusters = [[1150, 575, 70, 50, 120], [250, 960, 45, 70, 100], [230, 860, 45, 60, 30], [370, 1340, 45, 90, 70], [390, 1470, 50, 40, 30], [490, 1440, 100, 60, 35], [1180, 990, 40, 40, 8], [1200, 1060, 20, 40, 5], [1010, 1060, 8, 20, 3], [1270, 925, 20, 15, 4], [640, 180, 15, 15, 10], [490, 565, 15, 12, 14]];
  clusters.forEach(([cx, cy, rx, ry, count]) => {
    for (let n = 0; n < count; n++) {
      const a = r() * 6.283;
      const m = Math.sqrt(r());
      d += speck(cx + Math.cos(a) * rx * m, cy + Math.sin(a) * ry * m, 4 + r() * 5, 3 + r() * 3);
    }
  });
  return d;
}
function scatterNorth() {
  const r = rng(7);
  let d = alongLines(north, r, 0.12, 3);
  const spots = [
    [1148, 38], [1185, 48], [978, 182], [1088, 210], [1199, 240], [1186, 256], [1283, 293], [1102, 375], [1262, 375], [1358, 426],
    [1343, 465], [1258, 490], [1258, 502], [1355, 502], [1013, 487], [1058, 558], [718, 587], [408, 640], [430, 664], [828, 768],
    [917, 822], [852, 848], [298, 926], [679, 996], [906, 1037], [352, 1105], [627, 1097], [579, 1133], [885, 1135], [472, 1214],
    [565, 1225], [88, 1343], [210, 1374], [255, 1368], [342, 1363], [627, 1315], [105, 1493], [157, 1530], [277, 1497], [420, 1524],
    [617, 1440], [1020, 1050], [1063, 900], [1145, 925], [1020, 958], [1115, 948], [1095, 968], [1098, 997], [1003, 1008], [912, 967],
    [1050, 935], [285, 1150], [1115, 800], [1070, 820], [1095, 828], [1017, 616], [1035, 648], [1395, 590], [1378, 604], [1280, 598],
  ];
  spots.forEach(([x, y]) => { d += speck(x, y, 7, 3); });
  [[1180, 640, 50, 40, 30], [1125, 715, 25, 30, 14], [695, 1375, 25, 30, 24], [1040, 1055, 30, 25, 18], [1300, 590, 30, 10, 8], [355, 1215, 30, 35, 20], [800, 1230, 40, 15, 6], [1095, 848, 30, 10, 8], [670, 1500, 30, 40, 10]].forEach(([cx, cy, rx, ry, count]) => {
    for (let n = 0; n < count; n++) {
      const a = r() * 6.283;
      const m = Math.sqrt(r());
      d += speck(cx + Math.cos(a) * rx * m, cy + Math.sin(a) * ry * m, 5 + r() * 4, 3);
    }
  });
  return d;
}
const southDots = scatterSouth();
const northDots = scatterNorth();

const MapLayer = ({ lines, blobs, dots, transform, width }) => (
  <g transform={transform}>
    {lines.map((pts) => (
      <polyline key={pts} points={pts} fill="none" stroke="#7d9297" strokeWidth={width} strokeLinejoin="round" vectorEffect="non-scaling-stroke" />
    ))}
    <path d={dots} fill="#3d483c" />
    {blobs.map(([cx, cy, rx, ry]) => (
      <ellipse key={`${cx}-${cy}`} cx={cx} cy={cy} rx={rx} ry={ry} fill="#6da858" stroke="#3d483c" strokeWidth=".7" vectorEffect="non-scaling-stroke" />
    ))}
  </g>
);

const SwedenMap = () => (
  <svg width="2092" height="1266" viewBox="467 147 2092 1266" style={{ display: "block" }}>
    <MapLayer lines={north} blobs={northBlobs} dots={northDots} width={1} transform="translate(1300 160) scale(0.3333 0.4209)" />
    <MapLayer lines={south} blobs={southBlobs} dots={southDots} width={1.1} transform="translate(1200 800) scale(0.3333 0.3827)" />
  </svg>
);

/* ---------- window chrome ---------- */
const Page = styled.div`
  width: 2560px;
  height: 1440px;
  display: flex;
  flex-direction: column;
  overflow: hidden;
  background: #f0f0f0;
`;
const TitleBar = styled.div`
  height: 21px;
  flex: none;
  display: flex;
  align-items: flex-start;
  background: linear-gradient(90deg, #7d97b0 0, #6f8cab 130px, #2e5482 175px, #2c5282 1180px, #3a5f8c 1240px, #2c5282 1300px, #2c5282 2280px, #5a7ea6 2450px, #5a7ea6 100%);
  border-bottom: 1px solid #15243a;
  box-sizing: border-box;
`;
const AppLogo = styled.div`
  width: 14px;
  height: 14px;
  margin: 3px 0 0 3px;
  box-sizing: border-box;
  border-radius: 50%;
  border: 3px solid #7fae3c;
  border-bottom-color: #e8b33c;
`;
const Caption = styled.span`
  margin: 4px 0 0 5px;
  color: #10233a;
  font-size: 12px;
  line-height: 14px;
`;
const WinControls = styled.div`
  margin-left: auto;
  margin-right: 3px;
  height: 17px;
  display: flex;
  border: 1px solid #33465e;
  border-top: 0;
  border-radius: 0 0 4px 4px;
  overflow: hidden;
`;
const WinBtn = styled.div`
  width: ${(p) => p.$w}px;
  display: flex;
  align-items: center;
  justify-content: center;
  color: #fff;
  font: 700 13px/1 "Liberation Sans", sans-serif;
  background: ${(p) => (p.$close ? "linear-gradient(#d98070, #c23d22 60%, #d66a4c)" : "linear-gradient(#a5b6c8, #6e879f 55%, #7f97ae)")};
  border-left: ${(p) => (p.$first ? 0 : "1px solid #d8e0e8")};
`;
const MenuBar = styled.div`
  height: 21px;
  flex: none;
  box-sizing: border-box;
  border-bottom: 1px solid #b9bcc4;
  display: flex;
  align-items: flex-end;
  gap: 16px;
  padding: 0 0 1px 8px;
  background: linear-gradient(#fff 0, #fff 2px, #dfe4f2 7px, #dce1f1 100%);
`;
const MenuItem = styled.span`
  font-size: 11.7px;
  line-height: 14px;
  color: #111;
`;
const ToolRow = styled.div`
  height: 34px;
  flex: none;
  box-sizing: border-box;
  display: flex;
  align-items: center;
  border-bottom: 1px solid ${(p) => (p.$last ? "#a6a6a6" : "#c6c6c6")};
`;
const Handle = styled.div`
  width: ${(p) => p.$w || 9}px;
  height: 26px;
  flex: none;
  background: radial-gradient(circle at 1px 1px, #aaa 1px, transparent 1.2px) 4px 0 / 3px 3px repeat-y;
`;
const RowSep = styled.div`
  width: 1px;
  height: 33px;
  margin-left: 1px;
  flex: none;
  background: #c6c6c6;
`;
const ToolBtn = styled.div`
  width: 31px;
  height: 31px;
  flex: none;
  box-sizing: border-box;
  display: flex;
  align-items: center;
  justify-content: center;
  border: 1px solid ${(p) => (p.$on ? "#6f6f6f" : "transparent")};
  border-radius: 3px;
  background: ${(p) => (p.$on ? "#dedede" : "transparent")};
  svg { filter: ${(p) => (p.$off ? "grayscale(1) opacity(.42)" : "none")}; }
`;
const Caret = styled.div`
  width: 11px;
  height: 31px;
  flex: none;
  display: flex;
  align-items: center;
  justify-content: center;
  &::after {
    content: "";
    border: 4px solid transparent;
    border-top: 5px solid ${(p) => (p.$off ? "#777" : "#222")};
    border-bottom: 0;
  }
`;

const row1 = ["h", "doc", "folder", "save", "saveas", "layout", "manager", "style", "|", "hand*", "pan", "zoomin", "zoomout", "-zoom11", "zoomfull", "zoomsel", "zoomlayer", "zoomlast", "-zoomnext", "-mapnew", "-mapbook", "-mapmark", "refresh", "|", "identify", "-action", "v", "select", "V", "selform", "V", "deselect", "table", "abacus", "gear", "sigma", "measure", "V", "tip*", "text", "V"];
const row2 = ["h", "dsm", "gpkg", "newshp", "newsl", "newmem", "|", "-pencils", "pencil", "-saveedit", "-addfeat", "-vtool", "v", "-modattr", "-trash", "-cut", "-copy", "-paste", "-undo", "-redo", "|", "lblabc", "diagram", "lblhl", "-lblpin", "-lbleye", "-lblmove", "-lblrot", "-lbledit", "s", "search", "|", "python", "hammer", "plugin", "V", "|", "help", "|"];
const row3 = ["h", "-measureline", "-blobarrow", "v", "-blobrot", "-hexa", "-ring", "-part", "-ring", "-ringdel", "-part", "-reshape", "-offset", "-vertex", "-split", "-merge", "-merge", "-rotate", "-curve", "v"];

const Tokens = ({ items }) =>
  items.map((t, i) => {
    if (t === "h") return <Handle key={i} />;
    if (t === "|") return <React.Fragment key={i}><RowSep /><Handle $w={10} /></React.Fragment>;
    if (t === "s") return <React.Fragment key={i}><RowSep /><Handle $w={11} /></React.Fragment>;
    if (t === "v") return <Caret key={i} $off />;
    if (t === "V") return <Caret key={i} />;
    const off = t[0] === "-";
    const on = t.endsWith("*");
    const name = t.replace("-", "").replace("*", "");
    return <ToolBtn key={i} $off={off} $on={on}><I>{icons[name]}</I></ToolBtn>;
  });

/* ---------- left side ---------- */
const Body = styled.div`
  flex: 1;
  min-height: 0;
  display: flex;
  padding-top: 2px;
`;
const VBar = styled.div`
  width: 47px;
  flex: none;
  box-sizing: border-box;
  display: flex;
  flex-direction: column;
`;
const VHandle = styled.div`
  height: 6px;
  flex: none;
  margin: 0 4px;
  background: radial-gradient(circle at 1px 1px, #aaa 1px, transparent 1.2px) 0 2px / 3px 3px repeat-x;
`;
const VItem = styled.div`
  height: 30px;
  display: flex;
  align-items: center;
  padding-left: 4px;
`;
const VCaret = styled(Caret)`
  width: 14px;
  margin-left: -2px;
`;
const Docks = styled.div`
  width: 415px;
  flex: none;
  display: flex;
  flex-direction: column;
`;
const DockTitle = styled.div`
  height: 25px;
  flex: none;
  box-sizing: border-box;
  display: flex;
  align-items: center;
  padding: 0 4px 0 5px;
  background: #d8d8d8;
  border: 1px solid #bdbdbd;
  font-size: 11.7px;
  color: #222;
`;
const DockIcon = styled.span`
  margin-left: ${(p) => (p.$auto ? "auto" : "7px")};
  display: flex;
`;
const DockBar = styled.div`
  height: 28px;
  flex: none;
  display: flex;
  align-items: center;
  padding-left: 2px;
`;
const MiniBtn = styled.div`
  width: 23px;
  display: flex;
  justify-content: center;
`;
const MiniCaret = styled(Caret)`
  width: 13px;
  height: 16px;
`;
const TreeBox = styled.div`
  position: relative;
  height: ${(p) => (p.$h ? `${p.$h}px` : "auto")};
  flex: ${(p) => (p.$h ? "none" : "1")};
  box-sizing: border-box;
  padding-top: ${(p) => (p.$h ? 1 : 2)}px;
  background: #fff;
  border: 1px solid #999;
  overflow: hidden;
`;
const Row = styled.div`
  height: 20px;
  display: flex;
  align-items: center;
  white-space: nowrap;
`;
const Twist = styled.div`
  width: 23px;
  flex: none;
  display: flex;
  justify-content: flex-end;
  padding-right: 7px;
  box-sizing: border-box;
  &::after {
    content: "";
    display: ${(p) => (p.$show ? "block" : "none")};
    width: 5px;
    height: 8px;
    clip-path: polygon(0 0, 100% 50%, 0 100%, 0 0, 1px 2px, 1px 6px, 4px 4px, 1px 2px);
    box-shadow: inset 0 0 0 9px #8d8d8d;
  }
`;
const RowIcon = styled.span`
  width: 22px;
  flex: none;
  display: flex;
  align-items: center;
`;
const RowText = styled.span`
  font-size: 11.7px;
  color: #111;
`;
const ScrollTrack = styled.div`
  position: absolute;
  top: 0;
  right: 0;
  bottom: 0;
  width: 16px;
  display: flex;
  flex-direction: column;
  align-items: center;
  background: #fff;
`;
const ScrollBtn = styled.div`
  height: 18px;
  flex: none;
  display: flex;
  align-items: center;
  &::after {
    content: "";
    border: 4px solid transparent;
    ${(p) => (p.$down ? "border-top: 4px solid #666; border-bottom: 0;" : "border-bottom: 4px solid #666; border-top: 0;")}
  }
`;
const ScrollThumb = styled.div`
  width: 13px;
  height: 121px;
  box-sizing: border-box;
  flex: none;
  display: flex;
  align-items: center;
  justify-content: center;
  border: 1px solid #b3b3b3;
  border-radius: 2px;
  background: linear-gradient(90deg, #f2f2f2, #d6d6d6);
  &::after {
    content: "";
    width: 7px;
    height: 7px;
    background: repeating-linear-gradient(#777 0 1px, transparent 1px 3px);
  }
`;
const ScrollFill = styled.div`
  flex: 1;
`;
const Tabs = styled.div`
  height: 26px;
  flex: none;
  display: flex;
  align-items: flex-start;
`;
const Tab = styled.div`
  height: ${(p) => (p.$on ? 20 : 17)}px;
  width: ${(p) => (p.$on ? 73 : 83)}px;
  box-sizing: border-box;
  display: flex;
  align-items: center;
  justify-content: center;
  font-size: 11.5px;
  border: 1px solid #9a9a9a;
  border-top: ${(p) => (p.$on ? 0 : "1px solid #9a9a9a")};
  border-left: ${(p) => (p.$on ? "1px solid #9a9a9a" : 0)};
  background: ${(p) => (p.$on ? "#fff" : "linear-gradient(#d9d9d9, #ececec)")};
`;
const LayerRow = styled(Row)`
  margin: 0 1px 0 20px;
  box-sizing: border-box;
  padding-left: 3px;
  border: 1px solid ${(p) => (p.$on ? "#d0d0d0" : "transparent")};
  border-radius: 2px;
  background: ${(p) => (p.$on ? "#ececec" : "transparent")};
`;
const Check = styled.span`
  width: 12px;
  height: 12px;
  flex: none;
  box-sizing: border-box;
  display: flex;
  align-items: center;
  justify-content: center;
  background: linear-gradient(#e4e4e4, #fafafa);
  border: 1px solid #8e8f8f;
  color: #3a5f98;
  font: 700 10px/1 "DejaVu Sans", sans-serif;
`;
const Swatch = styled.span`
  width: 16px;
  height: 16px;
  flex: none;
  margin: 0 6px;
  box-sizing: border-box;
  background: #6aab94;
  border: 1px solid #5e7f73;
`;
const LineMark = styled.span`
  width: 16px;
  height: 1px;
  flex: none;
  margin: 0 6px;
  background: #8a8a8a;
`;
const LayerName = styled.span`
  font-weight: 700;
  font-size: ${(p) => (p.$on ? 12 : 11.4)}px;
  color: #111;
  text-decoration: ${(p) => (p.$on ? "underline" : "none")};
`;
const MapPane = styled.div`
  flex: 1;
  margin-left: 4px;
  box-sizing: border-box;
  background: #fff;
  border: 1px solid #8e8e8e;
  overflow: hidden;
`;

/* ---------- status bar ---------- */
const Status = styled.div`
  height: 28px;
  flex: none;
  box-sizing: border-box;
  padding: 2px 0 0 5px;
  display: flex;
  align-items: center;
  font-size: 11.5px;
  color: #222;
`;
const SearchBox = styled.div`
  width: 222px;
  height: 20px;
  box-sizing: border-box;
  display: flex;
  align-items: center;
  gap: 6px;
  padding-left: 8px;
  color: #8a8a8a;
  background: #fff;
  border: 1px solid #e2e2e2;
  border-radius: 2px;
`;
const Klar = styled.span`
  margin-left: 8px;
`;
const Right = styled.div`
  margin-left: auto;
  display: flex;
  align-items: center;
`;
const StatLabel = styled.span`
  margin-left: ${(p) => p.$m || 0}px;
  white-space: nowrap;
`;
const Field = styled.div`
  width: ${(p) => p.$w}px;
  height: 20px;
  margin-left: ${(p) => p.$m || 3}px;
  box-sizing: border-box;
  display: flex;
  align-items: center;
  justify-content: space-between;
  padding-left: 4px;
  background: #fff;
  border: 1px solid #e2e2e2;
`;
const Spin = styled.div`
  width: 13px;
  height: 18px;
  display: flex;
  flex-direction: column;
  gap: 1px;
`;
const SpinPart = styled.div`
  flex: 1;
  display: flex;
  align-items: center;
  justify-content: center;
  border: 1px solid #b0b0b0;
  background: linear-gradient(#eef3fa, #c8d6e8);
  &::after {
    content: "";
    border: 3px solid transparent;
    ${(p) => (p.$down ? "border-top: 3px solid #4a6a92; border-bottom: 0;" : "border-bottom: 3px solid #4a6a92; border-top: 0;")}
  }
`;
const DropMark = styled.span`
  margin-right: 6px;
  border: 4px solid transparent;
  border-top: 5px solid #222;
  border-bottom: 0;
`;
const Slot = styled.span`
  display: flex;
  margin-left: ${(p) => p.$m || 0}px;
`;

const vbar = [["vline"], ["raster"], ["mesh"], ["vfeather"], ["vvirtual"], ["vblob", 1], ["vglobe", 1], ["vwms"], ["vgv", 1], ["vchip", 1]];
const drives = ["C:\\", "G:\\", "H:\\", "K:\\", "L:\\", "P:\\", "R:\\", "S:\\", "T:\\", "X:\\"];
const menu = [
  ["", "Projekt"], ["R", "edigera"], ["V", "isa"], ["L", "ager"], ["I", "nställningar"], ["P", "lugin"],
  ["", "Vekt", "o", "r"], ["R", "aster"], ["D", "atabas"], ["W", "eb"], ["G", "eobearbetning"], ["H", "jälp"],
];

const TreeRow = ({ icon, text, twist }) => (
  <Row>
    <Twist $show={twist} />
    <RowIcon><I s={16}>{icons[icon]}</I></RowIcon>
    <RowText>{text}</RowText>
  </Row>
);
const DockHead = ({ title }) => (
  <DockTitle>
    {title}
    <DockIcon $auto>
      <svg width="14" height="14" viewBox="0 0 14 14" fill="none" stroke="#222" strokeWidth="2">
        <path d="M5 4V1h8v7h-3" /><rect x="1" y="5" width="9" height="8" />
      </svg>
    </DockIcon>
    <DockIcon>
      <svg width="13" height="13" viewBox="0 0 13 13" stroke="#222" strokeWidth="2.6"><path d="M1 1l11 11M12 1L1 12" /></svg>
    </DockIcon>
  </DockTitle>
);
const Spinner = () => (
  <Spin><SpinPart /><SpinPart $down /></Spin>
);

export default function App() {
  return (
    <Page>
      <Global />
      <TitleBar>
        <AppLogo />
        <Caption>*Namnlöst projekt - QGIS</Caption>
        <WinControls>
          <WinBtn $w={29} $first>–</WinBtn>
          <WinBtn $w={27}>❐</WinBtn>
          <WinBtn $w={47} $close>✕</WinBtn>
        </WinControls>
      </TitleBar>
      <MenuBar>
        {menu.map(([u, a, m, z]) => (
          <MenuItem key={a}>
            {u ? <u>{u}</u> : null}{a}{m ? <u>{m}</u> : null}{z}
          </MenuItem>
        ))}
      </MenuBar>
      <ToolRow><Tokens items={row1} /></ToolRow>
      <ToolRow><Tokens items={row2} /></ToolRow>
      <ToolRow $last><Tokens items={row3} /></ToolRow>
      <Body>
        <VBar>
          <VHandle />
          {vbar.map(([name, caret]) => (
            <VItem key={name}>
              <I>{icons[name]}</I>
              {caret ? <VCaret /> : null}
            </VItem>
          ))}
        </VBar>
        <Docks>
          <DockHead title="Datakällor" />
          <DockBar>
            {["addgroup", "refresh", "filtery", "collapse", "info"].map((n) => (
              <MiniBtn key={n}><I s={16}>{icons[n]}</I></MiniBtn>
            ))}
          </DockBar>
          <TreeBox $h={284}>
            <TreeRow icon="star" text="Favoriter" />
            <TreeRow icon="home" text="Hem" twist />
            {drives.map((d) => <TreeRow key={d} icon="dir" text={d} twist />)}
            <TreeRow icon="gpkgtree" text="GeoPackage" />
            <TreeRow icon="slite" text="SpatiaLite" />
            <ScrollTrack>
              <ScrollBtn />
              <ScrollThumb />
              <ScrollFill />
              <ScrollBtn $down />
            </ScrollTrack>
          </TreeBox>
          <Tabs>
            <Tab $on>Datakällor</Tab>
            <Tab>Lagerordning</Tab>
          </Tabs>
          <DockHead title="Lager" />
          <DockBar>
            {["brush", "addlayer", "eye", "filtery", "expr"].map((n) => (
              <MiniBtn key={n}><I s={16}>{icons[n]}</I></MiniBtn>
            ))}
            <MiniCaret />
            <MiniBtn><I s={16}>{icons.expand}</I></MiniBtn>
            <MiniBtn><I s={16}>{icons.collapse}</I></MiniBtn>
            <MiniBtn><I s={16}>{icons.remove}</I></MiniBtn>
          </DockBar>
          <TreeBox>
            <LayerRow $on>
              <Check>✓</Check>
              <Swatch />
              <LayerName $on>To2015_Swe99TM</LayerName>
            </LayerRow>
            <LayerRow>
              <Check>✓</Check>
              <LineMark />
              <LayerName>Järnvägsnät_med_grundegenskaper</LayerName>
            </LayerRow>
          </TreeBox>
        </Docks>
        <MapPane><SwedenMap /></MapPane>
      </Body>
      <Status>
        <SearchBox>
          <I s={14}>{icons.lens}</I>
          Skriv för att hitta (Ctrl+K)
        </SearchBox>
        <Klar>Klar</Klar>
        <Right>
          <StatLabel>Koordinat</StatLabel>
          <Field $w={97}>-326166,6109213</Field>
          <Slot $m={3}><I s={16}>{icons.tracking}</I></Slot>
          <StatLabel $m={10}>Skala</StatLabel>
          <Field $w={78}>1:4630401<DropMark /></Field>
          <Slot $m={8}><I s={16}>{icons.lock}</I></Slot>
          <StatLabel $m={3}>Förstoringsglas</StatLabel>
          <Field $w={80}>100%<Spinner /></Field>
          <StatLabel $m={9}>Rotation</StatLabel>
          <Field $w={78} $m={7}>0,0 °<Spinner /></Field>
          <Slot $m={7}><Check>✓</Check></Slot>
          <StatLabel $m={5}>Rendera</StatLabel>
          <Slot $m={18}><I s={14}>{icons.crs}</I></Slot>
          <StatLabel $m={2}>EPSG:3006</StatLabel>
          <Slot $m={11}><I s={16}>{icons.msg}</I></Slot>
          <Slot $m={6} />
        </Right>
      </Status>
    </Page>
  );
}
